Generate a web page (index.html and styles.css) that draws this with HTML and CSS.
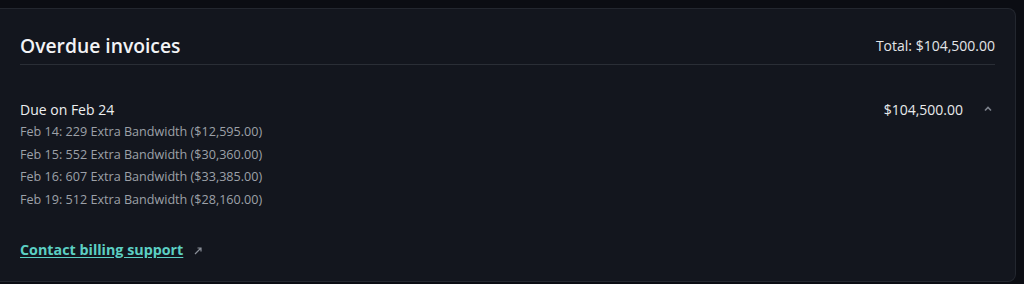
FILE: index.html
```html
<!DOCTYPE html>
<html lang="en">
<head>
    <meta charset="UTF-8">
    <title>Overdue invoices</title>
    <link rel="stylesheet" href="styles.css">
</head>
<body>
    <section class="card">
        <!-- header -->
        <div class="card-head">
            <h2 class="title">Overdue invoices</h2>
            <span class="total">Total: $104,500.00</span>
        </div>

        <!-- invoice group -->
        <div class="group">
            <div class="group-info">
                <div class="due">Due on Feb 24</div>
                <ul class="items">
                    <li>Feb 14: 229 Extra Bandwidth ($12,595.00)</li>
                    <li>Feb 15: 552 Extra Bandwidth ($30,360.00)</li>
                    <li>Feb 16: 607 Extra Bandwidth ($33,385.00)</li>
                    <li>Feb 19: 512 Extra Bandwidth ($28,160.00)</li>
                </ul>
            </div>
            <div class="group-amount">
                <span>$104,500.00</span>
                <svg class="chev" width="10" height="10" viewBox="0 0 10 10">
                    <path d="M2 6.5 L5 3.5 L8 6.5" fill="none" stroke="#7d828c" stroke-width="1.6"/>
                </svg>
            </div>
        </div>

        <a class="support" href="#">Contact billing support</a>
        <svg class="ext" width="10" height="10" viewBox="0 0 10 10">
            <path d="M2 8 L8 2 M4.5 2 H8 V5.5" fill="none" stroke="#8a8f98" stroke-width="1.2"/>
        </svg>
    </section>
</body>
</html>
```

FILE: styles.css
```css
body{
    margin: 0;
    padding-top: 8px;
    background: #0b0d13;
    font-family: "Open Sans", "Noto Sans", sans-serif;
    color: #e6e8eb;
}

/* card */
.card{
    box-sizing: border-box;
    width: 1016px;
    height: 274px;
    padding: 0 20px;
    background: #13161e;
    border: 1px solid #23272f;
    border-left: none;
    border-radius: 0 8px 8px 0;
}

.card-head{
    display: flex;
    justify-content: space-between;
    align-items: center;
    height: 56px;
    padding-top: 17px;
    box-sizing: border-box;
    border-bottom: 1px solid #2a2e36;
}

.title{
    margin: 0;
    font-size: 19.3px;
    font-weight: 600;
    color: #f2f3f5;
}

.total{
    font-size: 14px;
    color: #e3e5e8;
}

/* invoice group */
.group{
    display: flex;
    justify-content: space-between;
    padding-top: 34px;
}

.due{
    font-size: 14px;
    color: #eceef0;
    line-height: 22px;
}

.items{
    list-style: none;
    margin: 0;
    padding: 0;
    font-size: 12.6px;
    line-height: 22.7px;
    color: #9da1a8;
}

.group-amount{
    display: flex;
    align-items: flex-start;
    gap: 20px;
    font-size: 14px;
    line-height: 22px;
    color: #e8eaec;
}

.chev{
    margin-top: 5px;
    margin-right: 2px;
}

/* link */
.support{
    display: inline-block;
    margin-top: 28px;
    font-size: 14.3px;
    font-weight: 700;
    color: #5ccfc3;
    text-decoration: underline;
    text-underline-offset: 2px;
}

.ext{
    margin-left: 6px;
    vertical-align: -1px;
}
```
